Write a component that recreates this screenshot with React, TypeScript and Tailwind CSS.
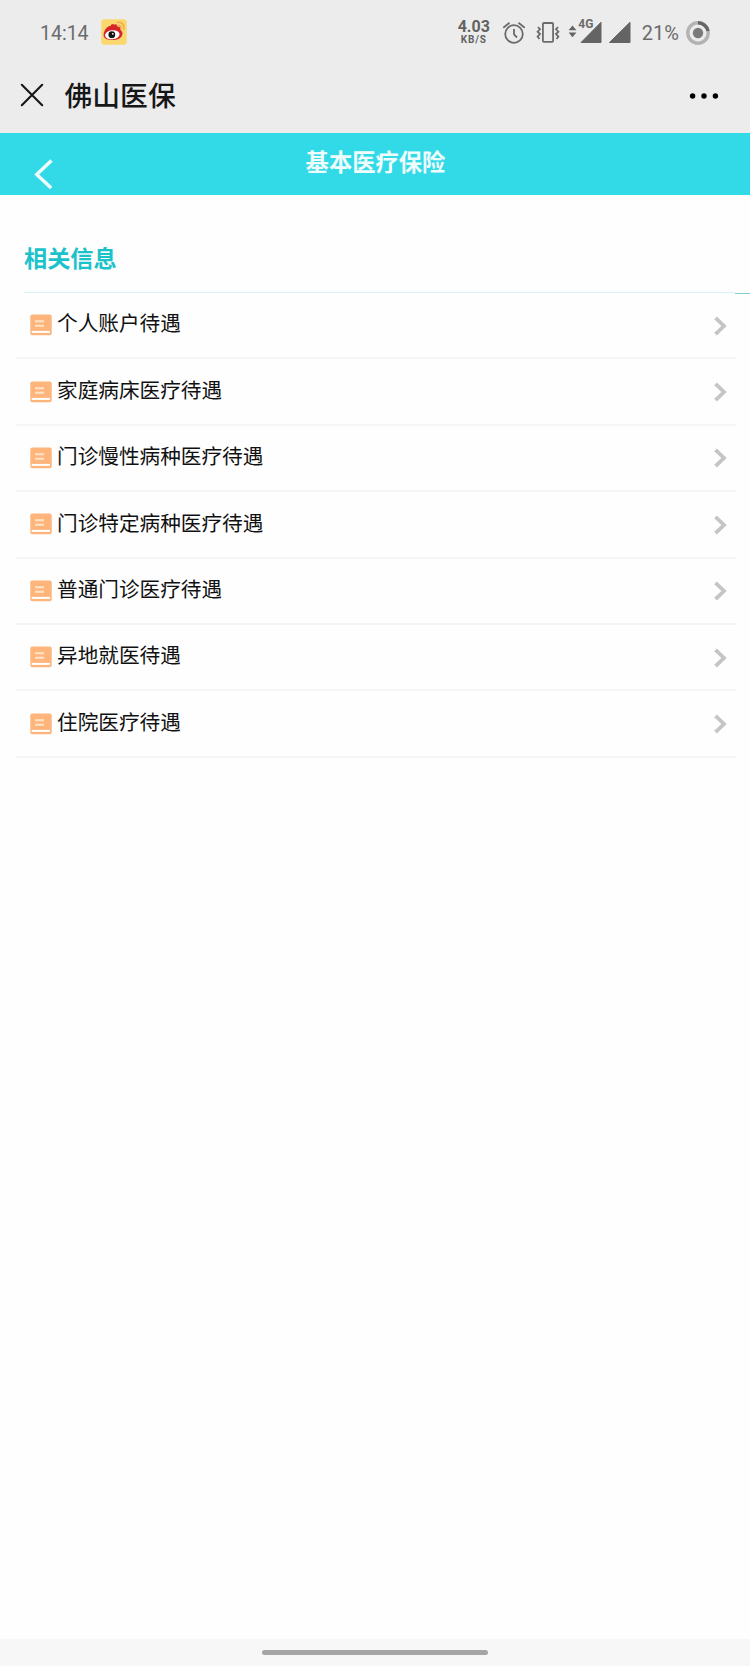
const items = [
  '个人账户待遇',
  '家庭病床医疗待遇',
  '门诊慢性病种医疗待遇',
  '门诊特定病种医疗待遇',
  '普通门诊医疗待遇',
  '异地就医待遇',
  '住院医疗待遇',
];

function WeiboIcon() {
  return (
    <svg className="ml-[12.5px] h-[26px] w-[26px]" viewBox="0 0 26 26" fill="none">
      <rect x="0.3" y="0.3" width="25.4" height="25.4" rx="3" fill="#fad86e" />
      <path
        d="M2.6 16.2C2.6 11.500 6.500 6.500 9.500 7c.8-2 2.500-2.600 3.600-1.200 1.300-1 3.200-.6 3 1.800 2.200-.3 3.800 1 3.400 3.400 1.200.7 2 2 2 3.500 0 3.800-4 6.500-9.400 6.500-5.300 0-9.500-1.400-9.500-4.800Z"
        fill="#d7262b"
      />
      <ellipse cx="11.300" cy="15.800" rx="7.300" ry="4.500" transform="rotate(-6 11.300 15.800)" fill="#fff" />
      <circle cx="10.800" cy="15.700" r="3.400" fill="#161313" />
      <circle cx="11.800" cy="14.800" r="0.900" fill="#fff" />
      <path d="M16.500 3.500c4.200-.9 7.200 2.300 6.300 6.700M17 6.600c2.200-.4 3.500 1 3 3.200" stroke="#f2a850" strokeWidth="1.500" strokeLinecap="round" />
    </svg>
  );
}

function AlarmIcon() {
  return (
    <svg className="ml-[12px] h-[24px] w-[24px]" viewBox="0 0 24 24" fill="none" stroke="#6b6b6b" strokeWidth="1.800">
      <circle cx="12" cy="13" r="8.800" />
      <path d="M12 8v5.500l3 3M1.300 6.700 7.500 1.800M22.700 6.700 16.500 1.800" />
    </svg>
  );
}

function VibrateIcon() {
  return (
    <svg className="ml-[10px] h-[24px] w-[24px]" viewBox="0 0 24 24" fill="none" stroke="#6b6b6b" strokeWidth="1.800">
      <rect x="6.900" y="2" width="10.200" height="18.800" rx="1" />
      <path d="m2 6 2 2.300-2.400 2.400 2.400 2.400-2.400 2.400L3.500 18M22 6l-2 2.300 2.400 2.400-2.400 2.400 2.400 2.400L20.500 18" />
    </svg>
  );
}

function MobileSignal() {
  return (
    <div className="relative ml-[8px] h-[24px] w-[34px]">
      <svg className="h-[24px] w-[34px]" viewBox="0 0 34 24" fill="#646464">
        <path d="M4.500 4.500 8.400 9.200H0.600ZM4.500 16.200 8.400 11.500H0.600Z" />
        <path d="M33 1.300V21.500H13Z" stroke="#646464" strokeLinejoin="round" />
      </svg>
      <span className="absolute top-[-1px] left-[10.5px] bg-[#ececec] text-[12px] leading-[9px] font-bold">4G</span>
    </div>
  );
}

function StatusBar() {
  return (
    <div className="flex h-[66px] items-center pr-[40px] pl-[40px] font-[Roboto,sans-serif] text-[#6b6b6b]">
      <span className="mt-px text-[19.5px] leading-none">14:14</span>
      <div className="-mt-[2px]">
        <WeiboIcon />
      </div>
      <div className="ml-auto flex items-center">
        <div className="-mt-[4px] flex flex-col items-center font-bold text-[#626262]">
          <span className="text-[16px] leading-[17px]">4.03</span>
          <span className="text-[10px] leading-[9px] tracking-[0.8px]">KB/S</span>
        </div>
        <AlarmIcon />
        <VibrateIcon />
        <MobileSignal />
        <svg className="ml-[5px] h-[24px] w-[24px]" viewBox="0 0 24 24" fill="#646464">
          <path d="M23 1.300V21.500H2.500Z" stroke="#646464" strokeLinejoin="round" />
        </svg>
        <span className="ml-[11px] text-[20px] leading-none">21%</span>
        <svg className="ml-[7px] -mt-px h-[24px] w-[24px]" viewBox="0 0 24 24" fill="none">
          <circle cx="12" cy="12" r="10.200" stroke="#b3b3b3" strokeWidth="3.400" />
          <path d="M12 1.800A10.200 10.200 0 0 1 22 10" stroke="#666" strokeWidth="3.400" />
          <circle cx="12" cy="12" r="5.200" fill="#7a7a7a" />
        </svg>
      </div>
    </div>
  );
}

function TitleBar() {
  return (
    <div className="flex h-[67px] items-center pr-[31px] pb-[9px] pl-[20px] text-[#171717]">
      <svg className="h-[24px] w-[24px]" viewBox="0 0 24 24" fill="none" stroke="currentColor" strokeWidth="2.100" strokeLinecap="round">
        <path d="m1.800 1.800 20.400 20.400M22.200 1.800 1.800 22.200" />
      </svg>
      <h1 className="ml-[20.5px] text-[27.8px] leading-none font-medium">佛山医保</h1>
      <svg className="ml-auto mt-[2px] h-[6px] w-[30px]" viewBox="0 0 30 6" fill="#000">
        <circle cx="3.600" cy="3" r="2.700" />
        <circle cx="15" cy="3" r="2.700" />
        <circle cx="26.400" cy="3" r="2.700" />
      </svg>
    </div>
  );
}

function BookIcon() {
  return (
    <svg className="h-[22px] w-[22px]" viewBox="0 0 22 22" fill="none">
      <rect x="0.300" y="0.500" width="21.400" height="20.700" rx="2" fill="#fdb57b" />
      <path d="M1.700 17.900h18.300" stroke="#fff" strokeWidth="2" />
      <path d="M5 7.300h9M5 11.800h9" stroke="#ffe3c8" strokeWidth="1.900" />
    </svg>
  );
}

function ListRow({ label }: { label: string }) {
  return (
    <li className="flex h-[66.4px] items-center border-b-2 border-[#f5f5f5] pr-[9px] pl-[14px]">
      <BookIcon />
      <span className="-mt-[5px] ml-[5px] text-[20.65px] leading-none text-[#111]">{label}</span>
      <svg className="mt-px ml-auto h-[20px] w-[13px]" viewBox="0 0 13 20" fill="none" stroke="#c5c5c5" strokeWidth="3.800">
        <path d="m1.500 1.800 8.500 8.200-8.500 8.200" />
      </svg>
    </li>
  );
}

export default function App() {
  return (
    <div className="flex h-[1666px] w-[750px] flex-col bg-[#fefefe] font-['Noto_Sans_CJK_SC',sans-serif]">
      <div className="bg-[#ececec]">
        <StatusBar />
        <TitleBar />
      </div>

      <header className="flex h-[62px] items-start bg-[#32dae8] text-[#effdfd]">
        <svg className="mt-[26px] ml-[34px] h-[31px] w-[20px]" viewBox="0 0 20 31" fill="none" stroke="currentColor" strokeWidth="3.400">
          <path d="M17.500 1.500 2.700 15.500l14.500 13.500" />
        </svg>
        <h2 className="mt-[17px] mr-[53px] flex-1 text-center text-[23.3px] leading-none font-bold">基本医疗保险</h2>
      </header>

      <main className="flex-1">
        <div className="flex h-[98px] items-end">
          <div className="ml-[24px] flex h-full flex-1 items-start border-b border-[#d9f2f4] pt-[51px]">
            <h3 className="text-[23.2px] leading-none font-bold text-[#1bc2ca]">相关信息</h3>
          </div>
          <div className="-mb-px h-px w-[15px] bg-[#83cfcf]" />
        </div>
        <ul className="mr-[14px] ml-[16px]">
          {items.map((label) => (
            <ListRow key={label} label={label} />
          ))}
        </ul>
      </main>

      <footer className="flex h-[27px] justify-center bg-[#f7f7f7] pt-[11px]">
        <div className="h-[5px] w-[226px] rounded-full bg-[#a5a5a5]" />
      </footer>
    </div>
  );
}
